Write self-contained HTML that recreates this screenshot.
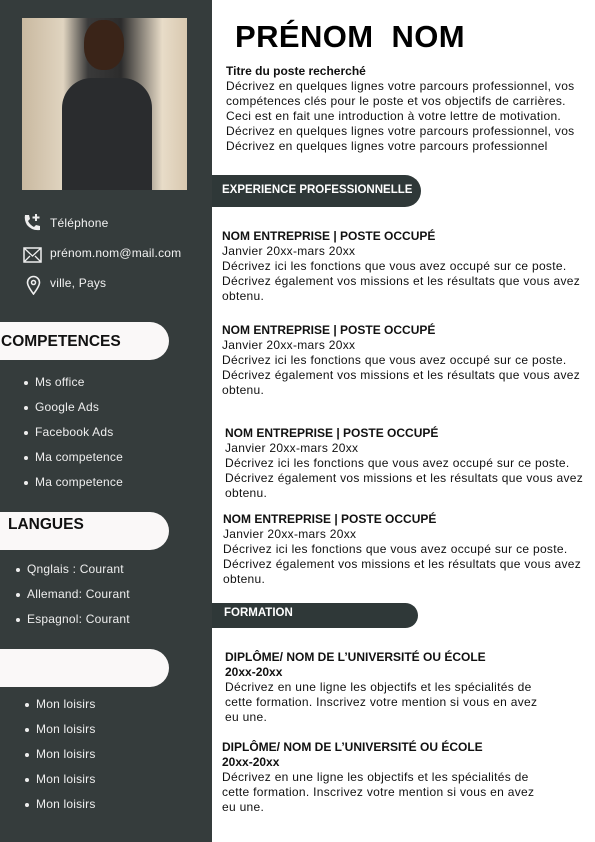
<!DOCTYPE html>
<html><head><meta charset="utf-8"><style>
*{margin:0;padding:0;box-sizing:border-box}
body{width:595px;height:842px;position:relative;background:#fff;font-family:"Liberation Sans",sans-serif;color:#111;overflow:hidden}
.side{position:absolute;left:0;top:0;width:212px;height:842px;background:#353c3c}
.a{position:absolute;white-space:nowrap}
.w{color:#f2f2f2;font-size:12px;letter-spacing:0.2px}
.pill{position:absolute;left:0;width:169px;height:38px;background:#faf8f8;border-radius:0 19px 19px 0;font-weight:bold;font-size:15.5px;color:#111;padding-top:11px}
.bar{position:absolute;left:212px;background:#2f3838;color:#fff;font-weight:bold;font-size:11.5px}
.t{font-size:12px;line-height:15px;letter-spacing:0.3px}
.b{font-weight:bold;letter-spacing:0}
.li{position:absolute;color:#eee;font-size:12px;letter-spacing:0.2px}
.li:before{content:"";position:absolute;left:-11px;top:6px;width:4px;height:4px;border-radius:50%;background:#eee}
</style></head><body>
<div class="side"></div>
<div class="a" style="left:22px;top:18px;width:165px;height:172px;background:linear-gradient(90deg,#c9b9a0 0,#e0d4c0 25%,#3a3a3a 40%,#2c2c2c 60%,#e8dcc8 85%,#d8c8b0 100%)">
<div style="position:absolute;left:62px;top:2px;width:40px;height:50px;border-radius:45%;background:#3a2418"></div>
<div style="position:absolute;left:40px;top:60px;width:90px;height:112px;background:#2a2c2e;border-radius:30px 30px 0 0"></div>
</div>
<svg class="a" style="left:22px;top:213px" width="20" height="20" viewBox="0 0 20 20"><path d="M3 2 L7 2 L8 6 L6 8 Q8 12 12 14 L14 12 L18 13 L18 17 Q10 18 5 12 Q2 7 3 2Z" fill="#eee"/><path d="M14 1v7M10.5 4.5h7" stroke="#eee" stroke-width="2"/></svg>
<div class="a w" style="left:50px;top:216px">Téléphone</div>
<svg class="a" style="left:23px;top:247px" width="19" height="16" viewBox="0 0 19 16"><rect x="1" y="1" width="17" height="14" fill="none" stroke="#eee" stroke-width="1.5"/><path d="M1 1l8.5 8L18 1M1 15l6-6M18 15l-6-6" fill="none" stroke="#eee" stroke-width="1.3"/></svg>
<div class="a w" style="left:50px;top:246px">prénom.nom@mail.com</div>
<svg class="a" style="left:26px;top:275px" width="15" height="20" viewBox="0 0 15 20"><path d="M7.5 19C3 13 1.5 10 1.5 7.5a6 6 0 0112 0C13.5 10 12 13 7.5 19z" fill="none" stroke="#eee" stroke-width="1.6"/><circle cx="7.5" cy="7.5" r="2" fill="none" stroke="#eee" stroke-width="1.5"/></svg>
<div class="a w" style="left:50px;top:276px">ville, Pays</div>
<div class="pill" style="top:322px;padding-left:1px">COMPETENCES</div>
<div class="li" style="left:35px;top:375px">Ms office</div>
<div class="li" style="left:35px;top:400px">Google Ads</div>
<div class="li" style="left:35px;top:425px">Facebook Ads</div>
<div class="li" style="left:35px;top:450px">Ma competence</div>
<div class="li" style="left:35px;top:475px">Ma competence</div>
<div class="pill" style="top:512px;padding-left:8px;padding-top:4px">LANGUES</div>
<div class="li" style="left:27px;top:562px">Qnglais : Courant</div>
<div class="li" style="left:27px;top:587px">Allemand: Courant</div>
<div class="li" style="left:27px;top:612px">Espagnol: Courant</div>
<div class="pill" style="top:649px"></div>
<div class="li" style="left:36px;top:697px">Mon loisirs</div>
<div class="li" style="left:36px;top:722px">Mon loisirs</div>
<div class="li" style="left:36px;top:747px">Mon loisirs</div>
<div class="li" style="left:36px;top:772px">Mon loisirs</div>
<div class="li" style="left:36px;top:797px">Mon loisirs</div>

<div class="a b" style="left:235px;top:19px;font-size:31px;color:#000;letter-spacing:0.4px">PRÉNOM&nbsp; NOM</div>
<div class="a t" style="left:226px;top:64px"><span class="b">Titre du poste recherché</span><br>Décrivez en quelques lignes votre parcours professionnel, vos<br>compétences clés pour le poste et vos objectifs de carrières.<br>Ceci est en fait une introduction à votre lettre de motivation.<br>Décrivez en quelques lignes votre parcours professionnel, vos<br>Décrivez en quelques lignes votre parcours professionnel</div>
<div class="bar" style="top:175px;width:209px;height:32px;border-radius:0 16px 16px 0;padding:9px 0 0 10px">EXPERIENCE PROFESSIONNELLE</div>
<div class="a t" style="left:222px;top:229px"><span class="b">NOM ENTREPRISE | POSTE OCCUPÉ</span><br>Janvier 20xx-mars 20xx<br>Décrivez ici les fonctions que vous avez occupé sur ce poste.<br>Décrivez également vos missions et les résultats que vous avez<br>obtenu.</div>
<div class="a t" style="left:222px;top:323px"><span class="b">NOM ENTREPRISE | POSTE OCCUPÉ</span><br>Janvier 20xx-mars 20xx<br>Décrivez ici les fonctions que vous avez occupé sur ce poste.<br>Décrivez également vos missions et les résultats que vous avez<br>obtenu.</div>
<div class="a t" style="left:225px;top:426px"><span class="b">NOM ENTREPRISE | POSTE OCCUPÉ</span><br>Janvier 20xx-mars 20xx<br>Décrivez ici les fonctions que vous avez occupé sur ce poste.<br>Décrivez également vos missions et les résultats que vous avez<br>obtenu.</div>
<div class="a t" style="left:223px;top:512px"><span class="b">NOM ENTREPRISE | POSTE OCCUPÉ</span><br>Janvier 20xx-mars 20xx<br>Décrivez ici les fonctions que vous avez occupé sur ce poste.<br>Décrivez également vos missions et les résultats que vous avez<br>obtenu.</div>
<div class="bar" style="top:603px;width:206px;height:25px;border-radius:0 13px 13px 0;padding:4px 0 0 12px">FORMATION</div>
<div class="a t" style="left:225px;top:650px"><span class="b">DIPLÔME/ NOM DE L’UNIVERSITÉ OU ÉCOLE<br>20xx-20xx</span><br>Décrivez en une ligne les objectifs et les spécialités de<br>cette formation. Inscrivez votre mention si vous en avez<br>eu une.</div>
<div class="a t" style="left:222px;top:740px"><span class="b">DIPLÔME/ NOM DE L’UNIVERSITÉ OU ÉCOLE<br>20xx-20xx</span><br>Décrivez en une ligne les objectifs et les spécialités de<br>cette formation. Inscrivez votre mention si vous en avez<br>eu une.</div>
</body></html>
